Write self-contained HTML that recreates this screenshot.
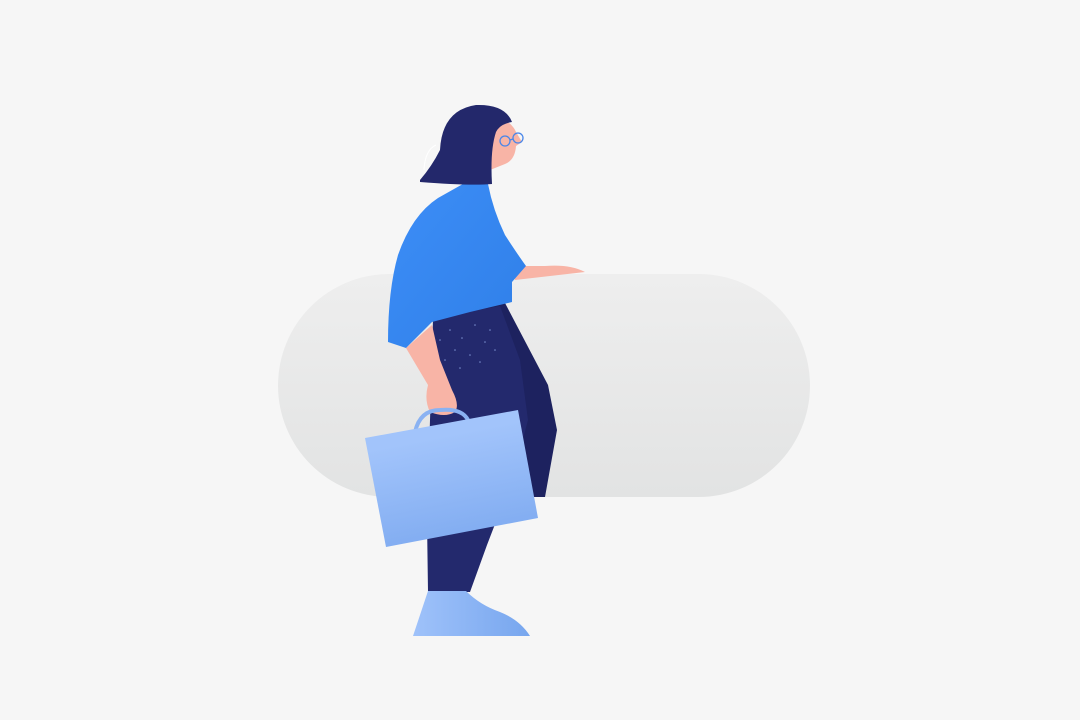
<!DOCTYPE html>
<html><head><meta charset="utf-8"><style>html,body{margin:0;padding:0;background:#f6f6f6;}svg{display:block}</style></head>
<body>
<svg width="1080" height="720" viewBox="0 0 1080 720" xmlns="http://www.w3.org/2000/svg">
<defs>
<linearGradient id="pill" x1="0" y1="0" x2="0" y2="1"><stop offset="0" stop-color="#eeeeee"/><stop offset="1" stop-color="#e2e3e3"/></linearGradient>
<linearGradient id="shirt" x1="0" y1="0" x2="1" y2="1"><stop offset="0" stop-color="#3d8ef7"/><stop offset="1" stop-color="#2f7fe8"/></linearGradient>
<linearGradient id="bag" x1="0.4" y1="0.2" x2="0.6" y2="1"><stop offset="0" stop-color="#a2c4fb"/><stop offset="1" stop-color="#7eaaf0"/></linearGradient>
<linearGradient id="shoe" x1="0" y1="0" x2="1" y2="0"><stop offset="0" stop-color="#9fc2fa"/><stop offset="1" stop-color="#77a6ee"/></linearGradient>
</defs>
<rect x="278" y="274" width="532" height="223" rx="111.5" fill="url(#pill)"/>
<!-- back leg -->
<path d="M470 305 L505 303 L548 385 L557 430 L545 497 L525 497 L505 400 Z" fill="#1d225f"/>
<!-- pants -->
<path d="M433 318 L500 306 L520 360 L528 420 L512 480 L487 545 L470 592 L428 592 L427 520 L430 420 L432 360 Z" fill="#23296d"/>
<g fill="#8fa6e6" opacity="0.8">
<circle cx="450" cy="330" r="0.8"/><circle cx="462" cy="338" r="0.8"/><circle cx="475" cy="325" r="0.8"/><circle cx="485" cy="342" r="0.8"/><circle cx="455" cy="350" r="0.8"/><circle cx="470" cy="355" r="0.8"/><circle cx="490" cy="330" r="0.8"/><circle cx="445" cy="360" r="0.8"/><circle cx="480" cy="362" r="0.8"/><circle cx="495" cy="350" r="0.8"/><circle cx="460" cy="368" r="0.8"/><circle cx="440" cy="340" r="0.8"/>
</g>
<!-- arm on pill -->
<path d="M512 266 L545 266 Q570 264 585 272 L515 280 Z" fill="#f8b4a6"/>
<!-- forearm & hand -->
<path d="M406 348 L432 325 L440 360 L452 390 Q460 405 455 412 Q445 418 430 412 Q424 400 428 385 Z" fill="#f8b4a6"/>
<!-- shirt -->
<path d="M470 180 L488 184 Q493 210 505 235 Q518 255 526 266 L512 282 L512 302 L470 312 L432 322 L406 348 L388 342 Q388 290 398 255 Q412 215 438 198 Z" fill="url(#shirt)"/>
<!-- neck/face -->
<path d="M478 165 L492 118 Q510 118 516 132 L522 142 L516 146 Q515 160 505 164 L490 170 L490 182 L478 180 Z" fill="#f8b4a6"/>
<!-- hair -->
<path d="M420 180 Q432 166 440 150 Q442 110 476 105 Q505 104 512 122 Q500 124 496 132 Q490 150 492 184 Q470 186 420 182 Z" fill="#23286b"/>
<path d="M424 170 Q425 150 436 145" stroke="#fff" stroke-width="1" fill="none"/>
<!-- glasses -->
<circle cx="505" cy="141" r="5" fill="none" stroke="#4a86e8" stroke-width="1.3"/>
<circle cx="518" cy="138" r="5" fill="none" stroke="#4a86e8" stroke-width="1.3"/>
<line x1="510" y1="140" x2="513" y2="139" stroke="#4a86e8" stroke-width="1.3"/>
<!-- bag handle -->
<path d="M415 432 Q420 410 440 410 Q462 408 468 420" fill="none" stroke="#8ab2f2" stroke-width="4"/>
<!-- bag -->
<path d="M365 438 L518 410 L538 518 L386 547 Z" fill="url(#bag)"/>
<!-- shoe -->
<path d="M428 591 L466 591 Q480 605 500 612 Q520 620 530 636 L413 636 Z" fill="url(#shoe)"/>
</svg>
</body></html>
